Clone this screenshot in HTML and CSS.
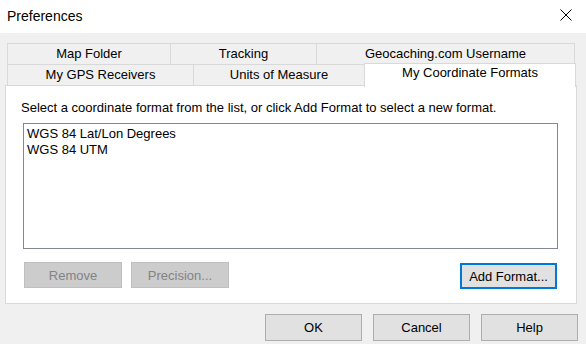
FILE: index.html
```
<!DOCTYPE html>
<html lang="en">
  <head>
    <meta charset="UTF-8">
    <title>Preferences</title>
    <link rel="stylesheet" href="styles.css">
  </head>
  <body>
    <div class="window">
      <div class="titlebar">
        <span class="title">Preferences</span>
        <svg class="close" width="12" height="12" viewBox="0 0 12 12">
          <path d="M0.5 0.5 L11.5 11.5 M11.5 0.5 L0.5 11.5" stroke="#000" stroke-width="1" fill="none"/>
        </svg>
      </div>

      <div class="content">
        <div class="tabs">
          <div class="tab-row">
            <div class="tab w-map">Map Folder</div>
            <div class="tab w-track">Tracking</div>
            <div class="tab w-geo">Geocaching.com Username</div>
          </div>
          <div class="tab-row">
            <div class="tab w-gps">My GPS Receivers</div>
            <div class="tab w-units">Units of Measure</div>
            <div class="tab w-coord selected">My Coordinate Formats</div>
          </div>
        </div>

        <div class="panel">
          <p class="hint">Select a coordinate format from the list, or click Add Format to select a new format.</p>
          <div class="listbox">
            <div class="item">WGS 84 Lat/Lon Degrees</div>
            <div class="item">WGS 84 UTM</div>
          </div>
          <div class="panel-buttons">
            <button class="btn disabled">Remove</button>
            <button class="btn disabled">Precision...</button>
            <span class="spacer"></span>
            <button class="btn focused">Add Format...</button>
          </div>
        </div>

        <div class="dialog-buttons">
          <button class="btn">OK</button>
          <button class="btn">Cancel</button>
          <button class="btn">Help</button>
        </div>
      </div>
    </div>
  </body>
</html>
```

FILE: styles.css
```
body {
  margin: 0;
  font-family: "Liberation Sans", Arial, sans-serif;
  color: #000;
}

.window {
  width: 586px;
  height: 344px;
  background-color: #f0f0f0;
  overflow: hidden;
}

.titlebar {
  height: 33px;
  background-color: #fff;
  display: flex;
  align-items: center;
  justify-content: space-between;
  padding: 0 14px 0 7px;
  box-sizing: border-box;
}

.title {
  font-size: 14px;
  margin-top: -1px;
}

.close {
  margin-top: -3px;
}

.content {
  padding-top: 10px;
}

/* tabs */
.tabs {
  margin-left: 7px;
}

.tab-row {
  display: flex;
  height: 21px;
}

.tab {
  box-sizing: border-box;
  height: 21px;
  border: 1px solid #d9d9d9;
  border-bottom: none;
  margin-right: -1px;
  text-align: center;
  font-size: 13px;
  line-height: 20px;
  background-color: #f0f0f0;
}

.w-map { width: 164px; }
.w-track { width: 147px; }
.w-geo { width: 259px; }
.w-gps { width: 187px; }
.w-units { width: 172px; }
.w-coord { width: 212px; }

.tab.selected {
  position: relative;
  z-index: 1;
  height: 24px;
  margin-top: -1px;
  background-color: #fff;
  line-height: 18px;
}

/* panel */
.panel {
  margin-left: 5px;
  width: 572px;
  height: 219px;
  box-sizing: border-box;
  background-color: #fff;
  border: 1px solid #d9d9d9;
  padding: 14px 18px 0 15px;
}

.hint {
  margin: 0 0 8px;
  font-size: 13px;
  line-height: 15px;
  white-space: nowrap;
}

.listbox {
  margin-left: 2px;
  height: 126px;
  border: 1px solid #828790;
  box-sizing: border-box;
  padding: 2px 3px;
}

.item {
  font-size: 13px;
  line-height: 16px;
}

.panel-buttons {
  display: flex;
  gap: 9px;
  margin-top: 13px;
  margin-left: 3px;
}

.spacer {
  flex: 1;
}

.btn {
  font-family: "Liberation Sans", Arial, sans-serif;
  font-size: 13px;
  width: 98px;
  height: 26px;
  padding: 0;
  background-color: #e1e1e1;
  border: 1px solid #adadad;
  color: #000;
  border-radius: 0;
}

.btn.disabled {
  background-color: #cccccc;
  border-color: #bfbfbf;
  color: #838383;
}

.btn.focused {
  width: 97px;
  margin-top: 1px;
  border: 2px solid #0078d7;
  margin-right: 1px;
}

.dialog-buttons {
  display: flex;
  justify-content: flex-end;
  gap: 11px;
  padding-right: 8px;
  margin-top: 10px;
}

.dialog-buttons .btn {
  width: 97px;
  height: 27px;
}
```
